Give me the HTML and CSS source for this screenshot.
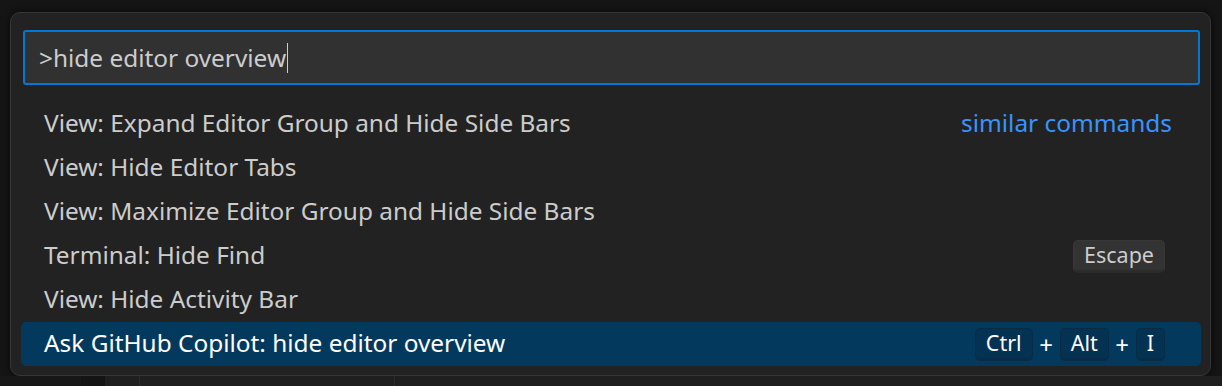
FILE: index.html
```html
<!DOCTYPE html>
<html>
<head>
<meta charset="utf-8">
<link rel="stylesheet" href="styles.css">
</head>
<body>
<div class="backdrop">
  <div class="quick-input">
    <div class="input-box">
      <span class="input-text">&gt;hide editor overview</span><span class="caret"></span>
    </div>
    <div class="list">
      <div class="row">
        <span class="label">View: Expand Editor Group and Hide Side Bars</span>
        <span class="link">similar commands</span>
      </div>
      <div class="row">
        <span class="label">View: Hide Editor Tabs</span>
      </div>
      <div class="row">
        <span class="label">View: Maximize Editor Group and Hide Side Bars</span>
      </div>
      <div class="row">
        <span class="label">Terminal: Hide Find</span>
        <span class="keys"><span class="key">Escape</span></span>
      </div>
      <div class="row">
        <span class="label">View: Hide Activity Bar</span>
      </div>
      <div class="row selected">
        <span class="label">Ask GitHub Copilot: hide editor overview</span>
        <span class="keys"><span class="key">Ctrl</span><span class="plus">+</span><span class="key">Alt</span><span class="plus">+</span><span class="key">I</span></span>
      </div>
    </div>
  </div>
  <div class="editor-strip">
    <div class="seg seg-a"></div>
    <div class="seg seg-b"></div>
    <div class="seg seg-c"></div>
    <div class="seg seg-d"></div>
    <div class="seg seg-e"></div>
  </div>
</div>
</body>
</html>
```
FILE: styles.css
```css
html, body {
  margin: 0;
  padding: 0;
  width: 1222px;
  height: 386px;
  overflow: hidden;
  background: #151515;
  font-family: "Noto Sans", "Open Sans", sans-serif;
}

.backdrop {
  display: flex;
  flex-direction: column;
  padding-top: 12px;
}

.quick-input {
  margin-left: 10px;
  width: 1201px;
  height: 364px;
  box-sizing: border-box;
  background: #222222;
  border: 1px solid #363636;
  border-radius: 10px;
  padding: 17px 9px 9px 10px;
  display: flex;
  flex-direction: column;
  box-shadow: 0 0 8px rgba(0, 0, 0, 0.6);
}

.input-box {
  margin: 0 1px 0 2px;
  height: 55px;
  box-sizing: border-box;
  border: 2px solid #0078d4;
  border-radius: 3px;
  background: #313131;
  display: flex;
  align-items: center;
  padding-left: 14px;
  color: #cccccc;
  font-size: 24.4px;
}

.caret {
  display: inline-block;
  width: 1px;
  height: 30px;
  background: #cccccc;
  margin-left: 1px;
}

.list {
  margin-top: 17px;
  display: flex;
  flex-direction: column;
}

.row {
  height: 44px;
  box-sizing: border-box;
  display: flex;
  align-items: center;
  justify-content: space-between;
  padding: 0 29px 3px 23px;
  color: #cccccc;
  font-size: 24.4px;
  border-radius: 5px;
}

.link {
  color: #3794ff;
}

.keys {
  display: flex;
  align-items: center;
  margin-right: 7px;
  margin-top: 3px;
}

.key {
  height: 33px;
  box-sizing: border-box;
  display: flex;
  align-items: center;
  padding: 0 10px 1px;
  font-size: 21.5px;
  color: #cccccc;
  background: #333333;
  border: 1px solid #383838;
  border-bottom: 3px solid #2b2b2b;
  border-radius: 5px;
}

.plus {
  font-size: 24px;
  width: 27px;
  text-align: center;
}

.selected {
  background: #04395e;
  color: #ffffff;
}

.selected .key {
  background: #043253;
  border-color: #0a2b44;
  color: #ffffff;
}

.selected .plus {
  color: #ffffff;
}

.editor-strip {
  display: flex;
  height: 10px;
}

.seg-a { width: 81px; background: #171717; }
.seg-b { width: 24px; background: #141414; }
.seg-c { width: 34px; background: #1f1f1f; border-right: 1px solid #2a2a2a; }
.seg-d { width: 254px; background: #1f1f1f; border-right: 1px solid #2a2a2a; }
.seg-e { flex: 1; background: #1f1f1f; }
```
